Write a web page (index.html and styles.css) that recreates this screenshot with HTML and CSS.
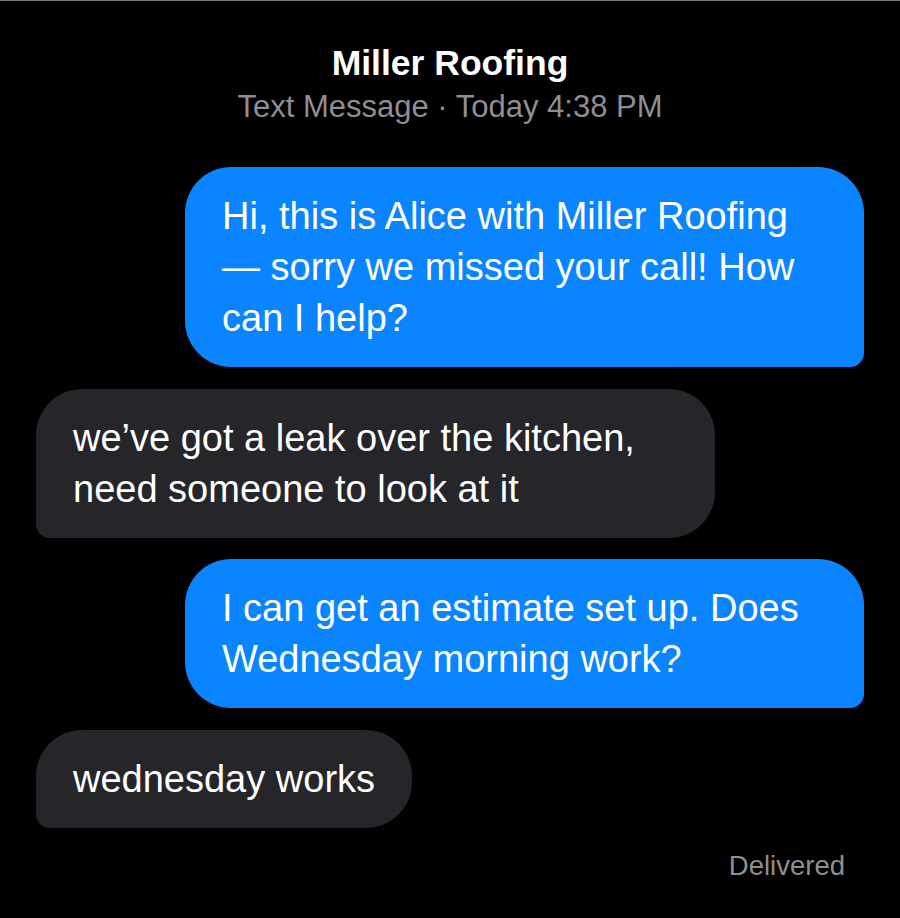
FILE: index.html
```html
<!DOCTYPE html>
<html lang="en">
<head>
<meta charset="utf-8">
<title>Miller Roofing</title>
<link rel="stylesheet" href="styles.css">
</head>
<body>
<div class="screen">
  <header class="header">
    <div class="title">Miller Roofing</div>
    <div class="subtitle">Text Message · Today 4:38 PM</div>
  </header>
  <main class="thread">
    <div class="bubble sent">Hi, this is Alice with Miller Roofing — sorry we missed your call! How can I help?</div>
    <div class="bubble received">we’ve got a leak over the kitchen, need someone to look at it</div>
    <div class="bubble sent">I can get an estimate set up. Does Wednesday morning work?</div>
    <div class="bubble received">wednesday works</div>
    <div class="status">Delivered</div>
  </main>
</div>
</body>
</html>
```
FILE: styles.css
```css
html, body {
  margin: 0;
  padding: 0;
  background: #000;
}

body {
  font-family: "Liberation Sans", Arial, Helvetica, sans-serif;
  color: #fff;
}

.screen {
  width: 900px;
  height: 918px;
  box-sizing: border-box;
  border-top: 1px solid #7d7d7d;
  overflow: hidden;
}

.header {
  display: flex;
  flex-direction: column;
  align-items: center;
  padding-top: 42px;
}

.title {
  font-size: 35.5px;
  font-weight: bold;
  line-height: 40px;
}

.subtitle {
  margin-top: 7px;
  font-size: 31px;
  line-height: 34px;
  color: #8e8e93;
}

.thread {
  display: flex;
  flex-direction: column;
  gap: 21.5px;
  padding: 43px 36px 0;
}

.bubble {
  max-width: 679px;
  box-sizing: border-box;
  padding: 24px 37px 23px;
  font-size: 38px;
  line-height: 51px;
  border-radius: 46px;
}

.sent {
  align-self: flex-end;
  background: #0a84ff;
  border-bottom-right-radius: 14px;
}

.received {
  align-self: flex-start;
  background: #26252a;
  border-bottom-left-radius: 14px;
}

.status {
  align-self: flex-end;
  margin-top: 1px;
  margin-right: 19px;
  font-size: 27.5px;
  line-height: 32px;
  color: #8e8e93;
}
```
